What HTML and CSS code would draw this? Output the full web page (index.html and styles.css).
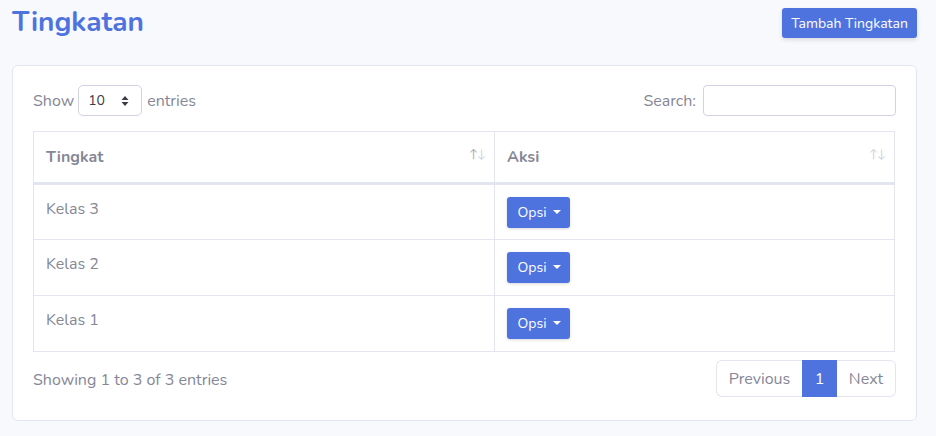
FILE: index.html
```html
<!DOCTYPE html>
<html lang="id">
<head>
<meta charset="utf-8">
<title>Tingkatan</title>
<link rel="stylesheet" href="styles.css">
</head>
<body>
<div class="page">
  <div class="page-head">
    <h1 class="title">Tingkatan</h1>
    <button class="btn btn-primary btn-add">Tambah Tingkatan</button>
  </div>
  <div class="card">
    <div class="toolbar">
      <label class="length">Show
        <span class="select"><span>10</span>
          <svg width="8" height="12" viewBox="0 0 8 12"><path d="M4 1 L7.5 5 H0.5 Z M4 11 L7.5 7 H0.5 Z" fill="#3a3b45"/></svg>
        </span>
        entries</label>
      <label class="search">Search: <span class="input"></span></label>
    </div>
    <table class="table">
      <thead>
        <tr>
          <th class="col1"><span>Tingkat</span><span class="sort"><span class="up">↑</span><span>↓</span></span></th>
          <th><span>Aksi</span><span class="sort"><span>↑</span><span>↓</span></span></th>
        </tr>
      </thead>
      <tbody>
        <tr><td>Kelas 3</td><td><button class="btn btn-primary btn-opsi">Opsi <span class="caret"></span></button></td></tr>
        <tr><td>Kelas 2</td><td><button class="btn btn-primary btn-opsi">Opsi <span class="caret"></span></button></td></tr>
        <tr><td>Kelas 1</td><td><button class="btn btn-primary btn-opsi">Opsi <span class="caret"></span></button></td></tr>
      </tbody>
    </table>
    <div class="footer">
      <div class="info">Showing 1 to 3 of 3 entries</div>
      <div class="pagination">
        <span class="pg pg-first">Previous</span>
        <span class="pg active">1</span>
        <span class="pg pg-last">Next</span>
      </div>
    </div>
  </div>
</div>
</body>
</html>
```
FILE: styles.css
```css
* { box-sizing: border-box; }
html, body { margin: 0; padding: 0; }
body {
  background: #f8f9fc;
  font-family: "Nunito", "Lato", "Noto Sans", sans-serif;
  color: #858796;
  font-size: 16px;
}
.page { padding: 0 20px 0 12px; width: 936px; }
.page-head {
  display: flex;
  justify-content: space-between;
  align-items: flex-start;
  height: 65px;
  padding-top: 8px;
}
.title {
  margin: 0;
  margin-top: -2px;
  font-size: 28px;
  font-weight: 700;
  color: #4e73df;
  line-height: 32px;
}
.btn {
  border: 0;
  font-family: inherit;
  color: #fff;
  background: #4e73df;
  border-radius: 3px;
  cursor: pointer;
}
.btn-add {
  width: 135px;
  height: 30px;
  font-size: 14px;
  padding: 0;
  box-shadow: 0 2px 4px rgba(58,59,69,0.15);
  margin-right: -1px;
}
.card {
  background: #fff;
  border: 1px solid #e3e6f0;
  border-radius: 6px;
  padding: 19px 20px 23px 20px;
  width: 905px;
}
.toolbar {
  display: flex;
  justify-content: space-between;
  align-items: center;
  height: 31px;
  margin-bottom: 15px;
}
.length, .search {
  display: flex;
  align-items: center;
  font-size: 16px;
}
.select {
  display: inline-flex;
  align-items: center;
  justify-content: space-between;
  width: 64px;
  height: 31px;
  border: 1px solid #d1d3e2;
  border-radius: 5px;
  margin: 0 5px 0 4px;
  padding: 0 12px 0 9px;
  color: #3a3b45;
  font-size: 14px;
}
.input {
  display: inline-block;
  width: 193px;
  height: 31px;
  border: 1px solid #d1d3e2;
  border-radius: 4px;
  margin-left: 7px;
}
.search { margin-right: 0; }
.table {
  width: 862px;
  border-collapse: collapse;
}
.table th, .table td {
  border: 1px solid #e3e6f0;
  text-align: left;
}
.table th {
  height: 52px;
  padding: 0 9px 0 12px;
  border-bottom: 3px solid #e3e6f0;
  font-size: 16px;
  font-weight: 700;
}
.table th .sort { float: right; font-size: 12px; color: #d1d3e2; letter-spacing: -1px; font-weight: 400; }
.table th .sort .up { color: #a8aab8; }
.table th.col1 { width: 461px; }
.table td {
  height: 56px;
  padding: 13px 12px 0 12px;
  vertical-align: top;
  font-size: 16px;
}
.table td:nth-child(2) { padding-top: 12px; }
.btn-opsi {
  width: 63px;
  height: 31px;
  font-size: 14px;
  padding: 0 0 0 2px;
  display: inline-flex;
  align-items: center;
  justify-content: center;
  box-shadow: 0 1px 3px rgba(58,59,69,0.2);
}
.caret {
  display: inline-block;
  margin-left: 7px;
  width: 0; height: 0;
  border-left: 4px solid transparent;
  border-right: 4px solid transparent;
  border-top: 4px solid #fff;
  position: relative;
  top: -1px;
}
.footer {
  display: flex;
  justify-content: space-between;
  align-items: center;
  margin-top: 8px;
}
.info { font-size: 16px; margin-top: 3px; }
.pagination { display: flex; }
.pg {
  height: 37px;
  display: flex;
  align-items: center;
  justify-content: center;
  border: 1px solid #e3e6f0;
  font-size: 16px;
  background: #fff;
}
.pg-first { width: 86px; border-radius: 6px 0 0 6px; border-right: 0; }
.pg.active { width: 35px; background: #4e73df; color: #fff; border-color: #4e73df; }
.pg-last { width: 59px; border-radius: 0 6px 6px 0; border-left: 0; }
```
